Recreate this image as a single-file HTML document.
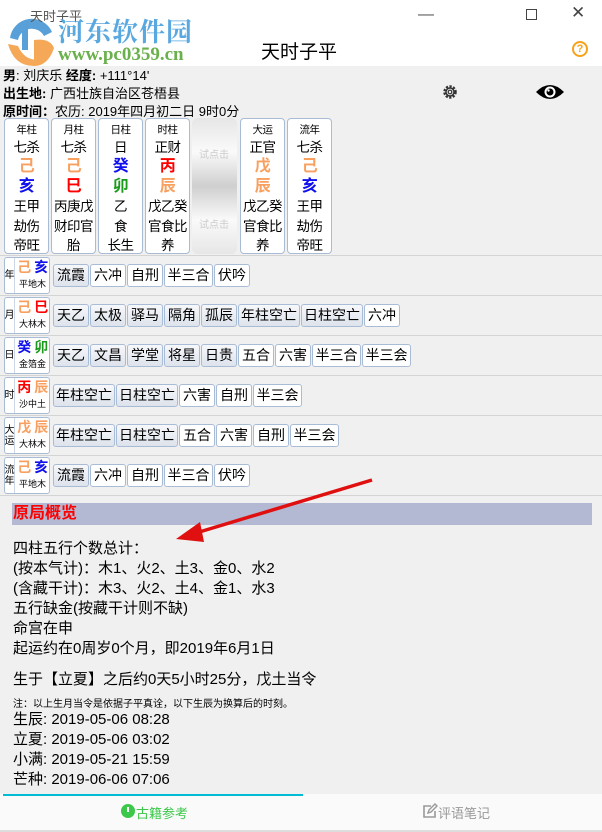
<!DOCTYPE html>
<html><head><meta charset="utf-8"><style>
*{margin:0;padding:0;box-sizing:border-box}
body{width:602px;height:832px;overflow:hidden;background:#f0f0f0;position:relative;font-family:"Liberation Sans","Noto Sans CJK SC",sans-serif;color:#000}
.a{position:absolute;white-space:nowrap}
.card{position:absolute;top:118px;height:136px;width:45px;background:#fff;border:1px solid #a9bcd6;border-radius:4px;text-align:center;white-space:nowrap;overflow:visible}
.card div{height:19.4px;line-height:19px;font-size:13.5px;margin-left:-4px;margin-right:-4px;letter-spacing:-0.5px}
.card .s{font-size:10.5px;height:18px;line-height:20px;margin-top:1px}
.card .big{font-size:16px;height:20px;line-height:20px;font-weight:bold}
.b{position:absolute;height:23px;border:1px solid #a9bcd6;border-radius:3px;background:#fff;font-size:14px;line-height:21px;text-align:center;white-space:nowrap}
.g{background:linear-gradient(#f7f8fb,#dde3ec)}
.lb{position:absolute;left:4px;width:46px;height:37px;background:#fff;border:1px solid #a9bcd6;border-radius:3px}
.lb .k{position:absolute;left:0;top:0;width:10px;height:35px;border-right:1px solid #ccd6e4;font-size:10px;line-height:11px;display:flex;align-items:center;justify-content:center;text-align:center}
.lb .t{position:absolute;left:10px;width:35px;top:1px;text-align:center;font-size:14px;font-weight:bold;line-height:17px;white-space:nowrap;letter-spacing:-0.5px}
.lb .n{position:absolute;left:10px;width:35px;top:20px;text-align:center;font-size:9px;line-height:12px;white-space:nowrap}
.sep{position:absolute;left:0;width:602px;height:1px;background:#d4d4d4}
.o{color:#f8a060}.bl{color:#1010ee}.r{color:#f00}.gr{color:#1a9a1a}
.txt{font-size:15px;left:13px}
</style></head><body>
<div class="a" style="left:0;top:0;width:602px;height:66px;background:#fff"></div>
<svg class="a" style="left:4px;top:8px" width="52" height="60" viewBox="0 0 52 60">
<path d="M6 30 A22 22 0 0 1 48 24 L40 28 A14 14 0 0 0 14 32 Z" fill="#5aa0d8"/>
<rect x="18" y="16" width="6" height="26" fill="#5aa0d8"/>
<path d="M4 36 Q10 58 30 58 L34 52 Q20 52 14 38 Z" fill="#f5a858"/>
<path d="M30 32 Q46 30 50 40 Q44 58 30 58 Z" fill="#f5a858"/>
</svg>
<div class="a" style="left:30px;top:6px;font-size:13px;color:#555">天时子平</div>
<div class="a" style="left:58px;top:12px;font-size:26px;font-weight:bold;color:#5aa8e0;font-family:'Noto Serif CJK SC',serif;letter-spacing:1px">河东软件园</div>
<div class="a" style="left:58px;top:44px;font-size:19px;font-weight:bold;color:#6ab04c;font-family:'Liberation Serif',serif">www.pc0359.cn</div>
<div class="a" style="left:418px;top:6px;font-size:16px;color:#555">—</div>
<div class="a" style="left:526px;top:9px;width:11px;height:11px;border:1px solid #444"></div>
<div class="a" style="left:571px;top:3px;font-size:17px;color:#444">✕</div>
<div class="a" style="left:261px;top:37px;font-size:19px">天时子平</div>
<div class="a" style="left:572px;top:41px;width:16px;height:16px;border:2px solid #f7a21b;border-radius:50%;color:#f7a21b;font-size:11px;font-weight:bold;text-align:center;line-height:12px">?</div>

<div class="a" style="left:3px;top:67px;font-size:13px;line-height:18px"><b>男</b>: 刘庆乐 <b>经度:</b> +111°14'<br><b>出生地:</b> 广西壮族自治区苍梧县<br><b>原时间：</b>农历: 2019年四月初二日 9时0分</div>
<svg class="a" style="left:442px;top:84px" width="16" height="16" viewBox="0 0 16 16"><circle cx="8" cy="8" r="5.5" fill="none" stroke="#333" stroke-width="2.5" stroke-dasharray="2.2 1.4"/><circle cx="8" cy="8" r="4" fill="none" stroke="#333" stroke-width="1.5"/><circle cx="8" cy="8" r="1.8" fill="none" stroke="#333" stroke-width="1.2"/></svg>
<svg class="a" style="left:535px;top:83px" width="30" height="18" viewBox="0 0 30 18"><path d="M1 9 Q15 -5 29 9 Q15 23 1 9Z" fill="#000"/><circle cx="15" cy="9" r="5.5" fill="#fff"/><circle cx="15" cy="9" r="3.5" fill="#000"/><circle cx="13.5" cy="7.5" r="1.2" fill="#fff"/></svg>

<div class="card" style="left:4px"><div class="s">年柱</div><div>七杀</div><div class="big o">己</div><div class="big bl">亥</div><div>王甲</div><div>劫伤</div><div>帝旺</div></div>
<div class="card" style="left:51px"><div class="s">月柱</div><div>七杀</div><div class="big o">己</div><div class="big r">巳</div><div>丙庚戊</div><div>财印官</div><div>胎</div></div>
<div class="card" style="left:98px"><div class="s">日柱</div><div>日</div><div class="big bl">癸</div><div class="big gr">卯</div><div>乙</div><div>食</div><div>长生</div></div>
<div class="card" style="left:145px"><div class="s">时柱</div><div>正财</div><div class="big r">丙</div><div class="big o">辰</div><div>戊乙癸</div><div>官食比</div><div>养</div></div>
<div class="a" style="left:192px;top:118px;width:45px;height:136px;border-radius:6px;background:linear-gradient(#e6e6e6,#fafafa 25%,#cfcfcf 50%,#fafafa 75%,#e6e6e6)"></div>
<div class="a" style="left:199px;top:146px;font-size:10px;color:#ccc">试点击</div>
<div class="a" style="left:199px;top:216px;font-size:10px;color:#ccc">试点击</div>
<div class="card" style="left:240px"><div class="s">大运</div><div>正官</div><div class="big o">戊</div><div class="big o">辰</div><div>戊乙癸</div><div>官食比</div><div>养</div></div>
<div class="card" style="left:287px"><div class="s">流年</div><div>七杀</div><div class="big o">己</div><div class="big bl">亥</div><div>王甲</div><div>劫伤</div><div>帝旺</div></div>

<div class="sep" style="top:255px"></div><div class="sep" style="top:295px"></div><div class="sep" style="top:335px"></div><div class="sep" style="top:375px"></div><div class="sep" style="top:415px"></div><div class="sep" style="top:455px"></div><div class="sep" style="top:495px"></div>

<div class="lb" style="top:257px"><div class="k">年</div><div class="t"><span class="o">己</span> <span class="bl">亥</span></div><div class="n">平地木</div></div>
<div class="lb" style="top:297px"><div class="k">月</div><div class="t"><span class="o">己</span> <span class="r">巳</span></div><div class="n">大林木</div></div>
<div class="lb" style="top:337px"><div class="k">日</div><div class="t"><span class="bl">癸</span> <span class="gr">卯</span></div><div class="n">金箔金</div></div>
<div class="lb" style="top:377px"><div class="k">时</div><div class="t"><span class="r">丙</span> <span class="o">辰</span></div><div class="n">沙中土</div></div>
<div class="lb" style="top:417px"><div class="k">大<br>运</div><div class="t"><span class="o">戊</span> <span class="o">辰</span></div><div class="n">大林木</div></div>
<div class="lb" style="top:457px"><div class="k">流<br>年</div><div class="t"><span class="o">己</span> <span class="bl">亥</span></div><div class="n">平地木</div></div>

<div class="b g" style="left:53px;top:264px;width:36px">流霞</div><div class="b" style="left:90px;top:264px;width:36px">六冲</div><div class="b" style="left:127px;top:264px;width:36px">自刑</div><div class="b" style="left:164px;top:264px;width:49px">半三合</div><div class="b" style="left:214px;top:264px;width:36px">伏吟</div>

<div class="b g" style="left:53px;top:304px;width:36px">天乙</div><div class="b g" style="left:90px;top:304px;width:36px">太极</div><div class="b g" style="left:127px;top:304px;width:36px">驿马</div><div class="b g" style="left:164px;top:304px;width:36px">隔角</div><div class="b g" style="left:201px;top:304px;width:36px">孤辰</div><div class="b g" style="left:238px;top:304px;width:62px">年柱空亡</div><div class="b g" style="left:301px;top:304px;width:62px">日柱空亡</div><div class="b" style="left:364px;top:304px;width:36px">六冲</div>

<div class="b g" style="left:53px;top:344px;width:36px">天乙</div><div class="b g" style="left:90px;top:344px;width:36px">文昌</div><div class="b g" style="left:127px;top:344px;width:36px">学堂</div><div class="b g" style="left:164px;top:344px;width:36px">将星</div><div class="b g" style="left:201px;top:344px;width:36px">日贵</div><div class="b" style="left:238px;top:344px;width:36px">五合</div><div class="b" style="left:275px;top:344px;width:36px">六害</div><div class="b" style="left:312px;top:344px;width:49px">半三合</div><div class="b" style="left:362px;top:344px;width:49px">半三会</div>

<div class="b g" style="left:53px;top:384px;width:62px">年柱空亡</div><div class="b g" style="left:116px;top:384px;width:62px">日柱空亡</div><div class="b" style="left:179px;top:384px;width:36px">六害</div><div class="b" style="left:216px;top:384px;width:36px">自刑</div><div class="b" style="left:253px;top:384px;width:49px">半三会</div>

<div class="b g" style="left:53px;top:424px;width:62px">年柱空亡</div><div class="b g" style="left:116px;top:424px;width:62px">日柱空亡</div><div class="b" style="left:179px;top:424px;width:36px">五合</div><div class="b" style="left:216px;top:424px;width:36px">六害</div><div class="b" style="left:253px;top:424px;width:36px">自刑</div><div class="b" style="left:290px;top:424px;width:49px">半三会</div>

<div class="b g" style="left:53px;top:464px;width:36px">流霞</div><div class="b" style="left:90px;top:464px;width:36px">六冲</div><div class="b" style="left:127px;top:464px;width:36px">自刑</div><div class="b" style="left:164px;top:464px;width:49px">半三合</div><div class="b" style="left:214px;top:464px;width:36px">伏吟</div>

<div class="a" style="left:12px;top:503px;width:580px;height:22px;background:#b3b9d3"></div>
<div class="a" style="left:13px;top:503px;font-size:16px;font-weight:bold;color:#f00;line-height:22px">原局概览</div>
<div class="a txt" style="top:539px;line-height:20px">四柱五行个数总计：<br>(按本气计)：木1、火2、土3、金0、水2<br>(含藏干计)：木3、火2、土4、金1、水3<br>五行缺金(按藏干计则不缺)<br>命宫在申<br>起运约在0周岁0个月，即2019年6月1日</div>
<div class="a txt" style="top:670px;line-height:20px">生于【立夏】之后约0天5小时25分，戊土当令</div>
<div class="a" style="left:13px;top:695px;font-size:10px">注：以上生月当令是依据子平真诠，以下生辰为换算后的时刻。</div>
<div class="a txt" style="top:710px;line-height:20px">生辰: 2019-05-06 08:28<br>立夏: 2019-05-06 03:02<br>小满: 2019-05-21 15:59<br>芒种: 2019-06-06 07:06</div>

<svg class="a" style="left:0;top:0" width="602" height="832"><line x1="372" y1="480" x2="196" y2="533" stroke="#e01010" stroke-width="3.5"/><polygon points="176,539 200,522 204,542" fill="#e01010"/></svg>

<div class="a" style="left:0;top:794px;width:602px;height:38px;background:#fafafa;border-bottom:2px solid #ddd"></div>
<div class="a" style="left:3px;top:794px;width:300px;height:2px;background:#00bcd4"></div>
<div class="a" style="left:121px;top:804px;width:14px;height:14px;border-radius:50%;background:#3cc84a"></div>
<div class="a" style="left:127px;top:807px;width:2px;height:5px;background:#fff"></div>
<div class="a" style="left:136px;top:803px;font-size:13px;color:#3cc84a">古籍参考</div>
<svg class="a" style="left:422px;top:803px" width="16" height="16" viewBox="0 0 16 16"><path d="M9 3H2v11h11V8" fill="none" stroke="#999" stroke-width="1.6"/><path d="M6 10l1-3 6-6 2 2-6 6z" fill="none" stroke="#999" stroke-width="1.4"/></svg>
<div class="a" style="left:438px;top:803px;font-size:13px;color:#999">评语笔记</div>
</body></html>
